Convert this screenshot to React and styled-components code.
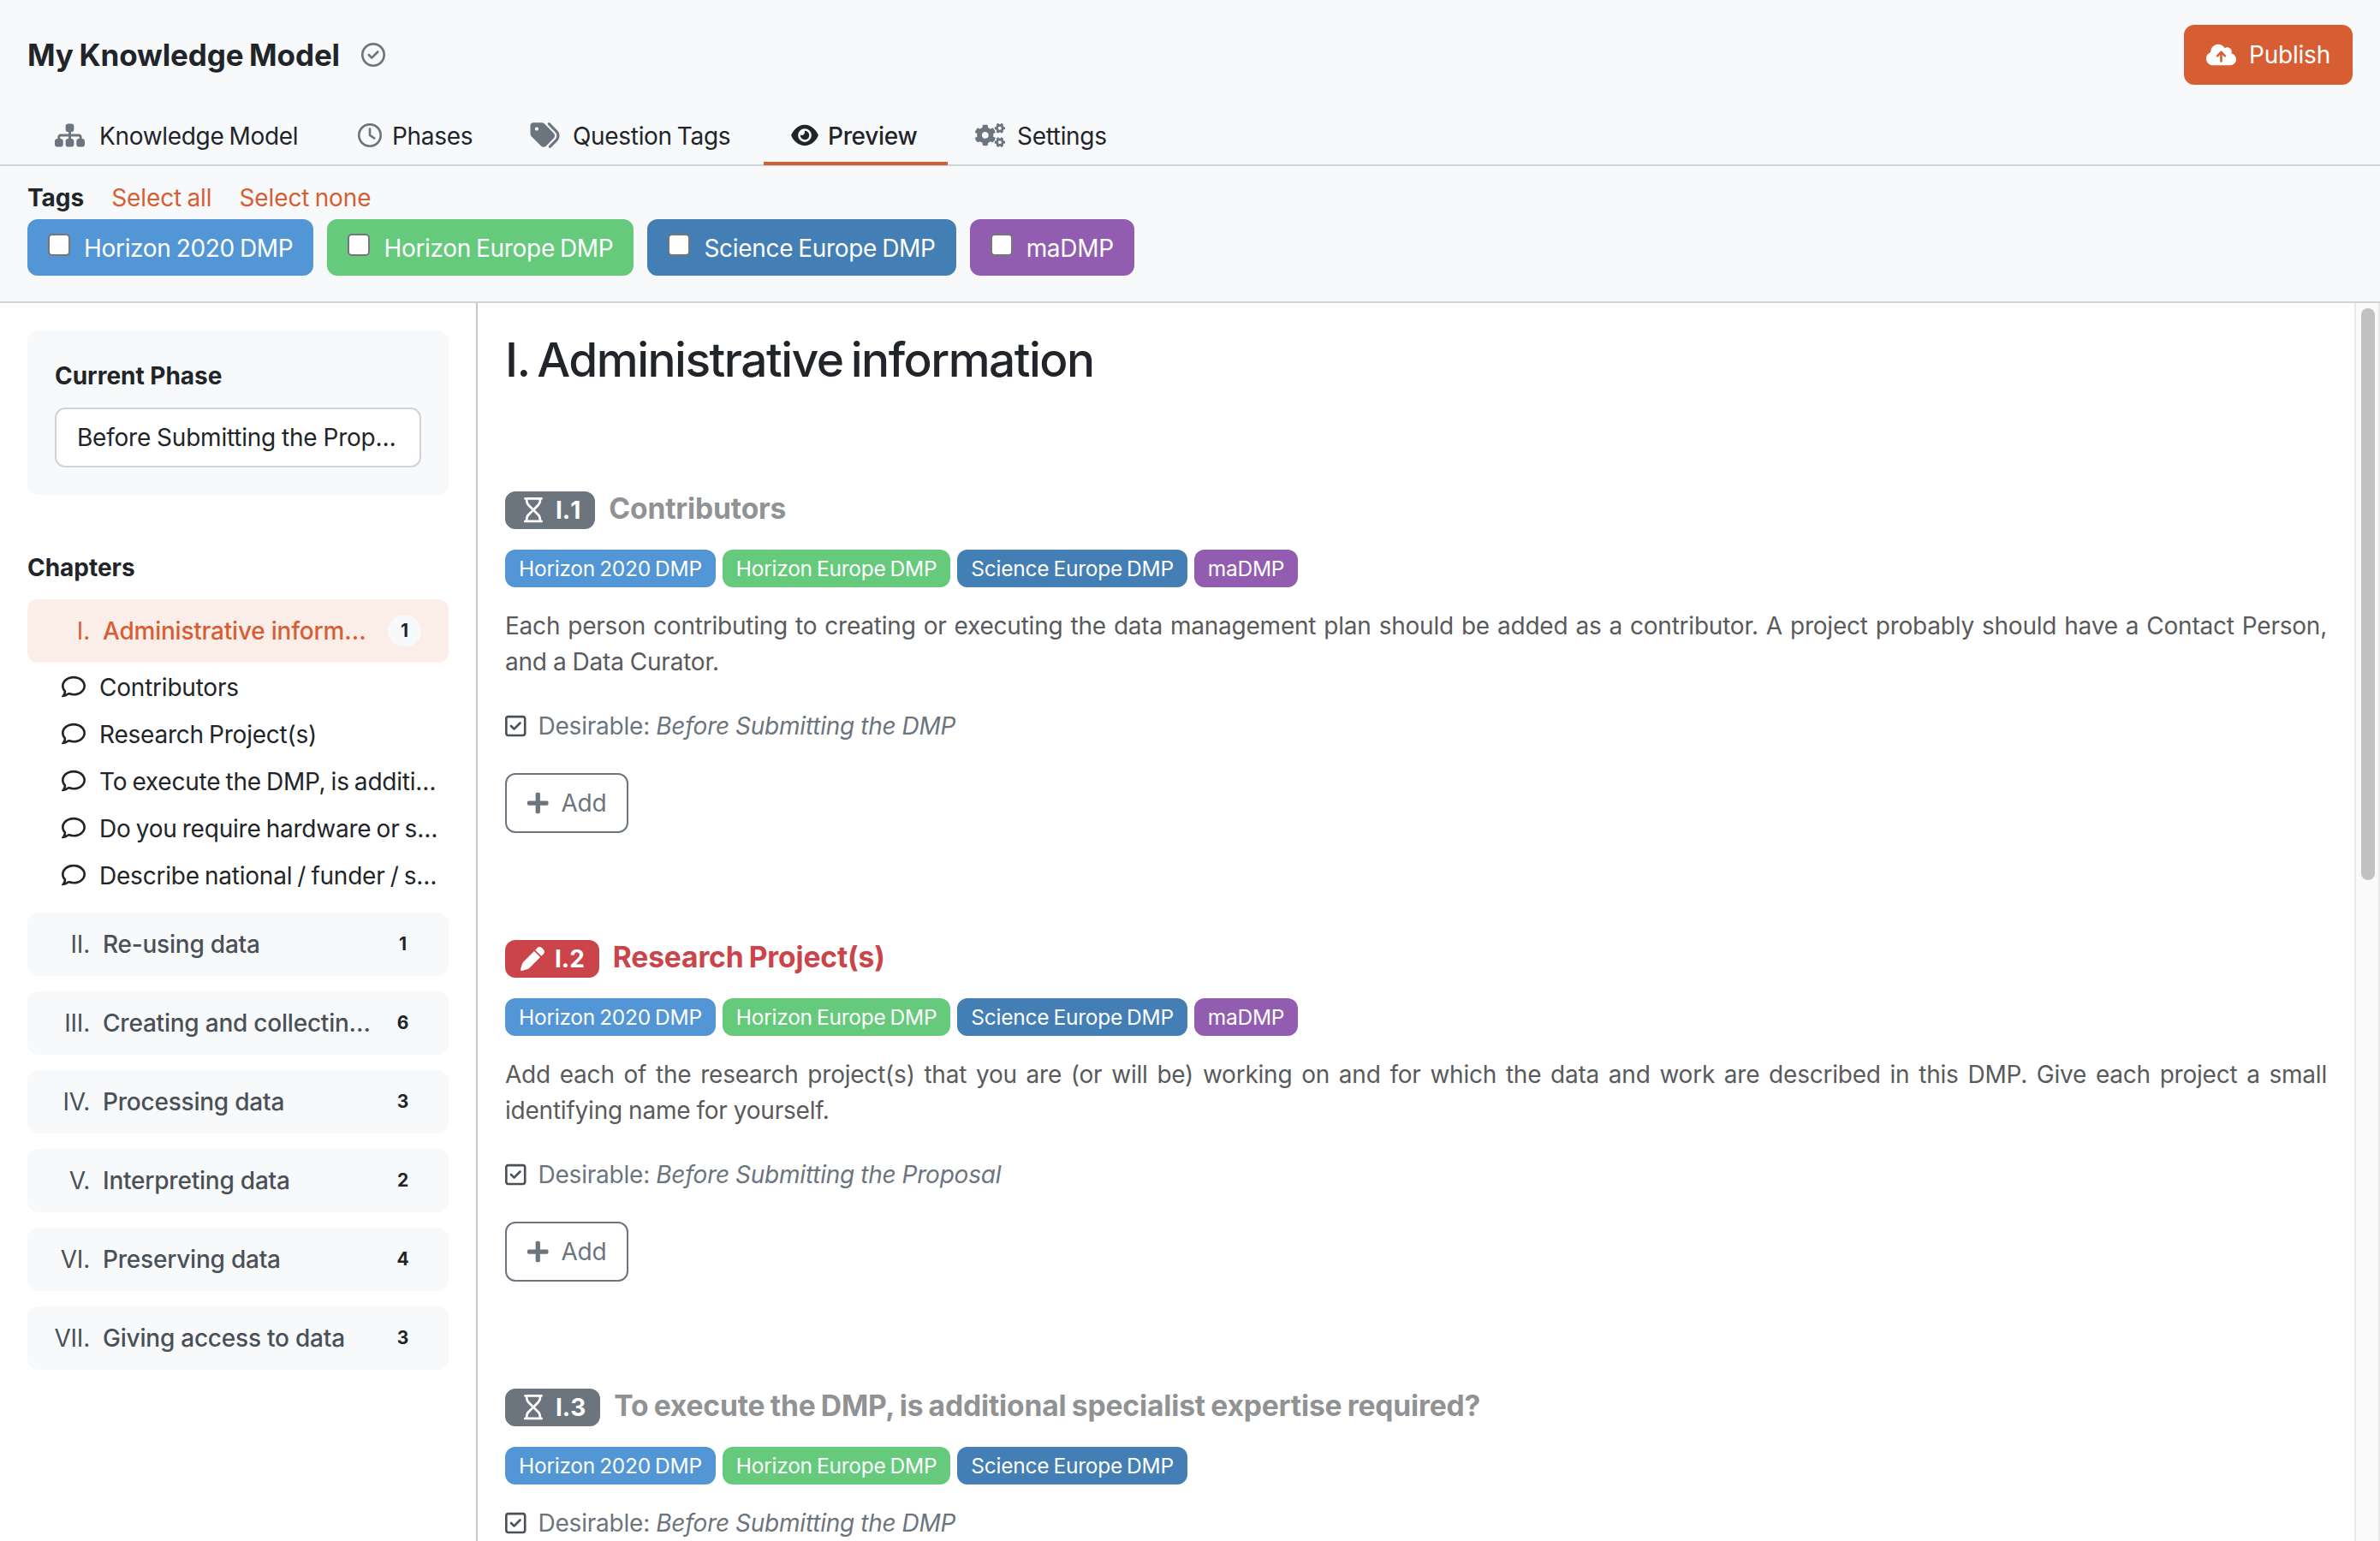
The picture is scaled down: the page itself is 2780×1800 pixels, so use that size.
import React from 'react';
import styled, { createGlobalStyle } from 'styled-components'
import {
  FaSitemap, FaRegClock, FaTags, FaEye, FaCloudArrowUp, FaRegCircleCheck,
  FaRegComment, FaRegHourglass, FaPen, FaRegSquareCheck,
} from "react-icons/fa6";
import { FaPlus, FaCogs } from "react-icons/fa";


const GlobalStyle = createGlobalStyle`
* {
  box-sizing: border-box;
}
body {
  margin: 0;
  background: #fff;
  color: #212529;
  font-family: Inter, "Liberation Sans", sans-serif;
  font-size: 28px;
  line-height: 42px;
  letter-spacing: -0.22px;
  word-spacing: -1.5px;
  overflow: hidden;
}
h1, h2, h3, p {
  margin: 0;
}
svg {
  display: block;
  flex: none;
}
`

const Page = styled.div`
display: flex;
flex-direction: column;
width: 100vw;
height: 100vh;
overflow: hidden;
white-space: nowrap;
`

const Header = styled.header`
display: flex;
align-items: center;
height: 126px;
padding: 2px 32px 0;
background: #f8f9fb;
`

const ModelName = styled.h1`
flex: 1;
display: flex;
align-items: center;
gap: 25px;
font-size: 35px;
font-weight: 700;
letter-spacing: -0.12px;
svg {
  font-size: 28px;
  color: #6c757d;
}
`

const Button = styled.button`
display: inline-flex;
align-items: center;
gap: 15px;
height: 70px;
padding: 0 24px;
border: 2px solid ${({ $primary }) => $primary ? '#d75e33' : '#6c757d'};
border-radius: 12px;
background: ${({ $primary }) => $primary ? '#d75e33' : '#fff'};
color: ${({ $primary }) => $primary ? '#fff' : '#6c757d'};
font: inherit;
letter-spacing: inherit;
svg {
  width: ${({ $primary }) => $primary ? 35 : 24.5}px;
  height: 28px;
}
`

const Tabs = styled.nav`
display: flex;
height: 68px;
padding: 0 32px;
border-bottom: 2px solid #ced4da;
background: #f8f9fb;
letter-spacing: -0.32px;
`

const Tab = styled.a`
display: flex;
align-items: center;
gap: ${({ $gap }) => $gap}px;
width: ${({ $width }) => $width}px;
height: 67px;
padding: 2px 0 0 32px;
font-weight: ${({ $active }) => $active ? 500 : 400};
border-bottom: 4px solid ${({ $active }) => $active ? '#d75e33' : 'transparent'};
svg {
  width: ${({ $iconWidth }) => $iconWidth}px;
  height: ${({ $iconHeight }) => $iconHeight || 28}px;
  margin-bottom: 2px;
  color: ${({ $active }) => $active ? '#212529' : '#6c757d'};
}
`

const TagBar = styled.section`
height: 160px;
padding: 16px 32px 0;
border-bottom: 2px solid #ced4da;
background: #f8f9fb;
`

const TagBarTop = styled.div`
display: flex;
gap: 32px;
height: 46px;
letter-spacing: -0.1px;
a {
  color: #d75e33;
}
`

const TagList = styled.div`
display: flex;
gap: 16px;
`

const TagOption = styled.label`
display: flex;
align-items: center;
gap: 16px;
height: 66px;
padding: 1px 24px 0;
border-radius: 12px;
background: ${({ $color }) => $color};
color: #fff;
letter-spacing: -0.31px;
`

const Checkbox = styled.input`
appearance: none;
width: 26px;
height: 26px;
margin: 0 0 7px;
border: 2px solid #767676;
border-radius: 5px;
background: #fff;
`

const Body = styled.div`
flex: 1;
display: flex;
min-height: 0;
`

const Sidebar = styled.aside`
width: 558px;
padding: 32px;
border-right: 2px solid #c8c8c8;
`

const PhaseCard = styled.div`
height: 192px;
margin-bottom: 64px;
padding: 32px;
border-radius: 12px;
background: #f8f9fb;
`

const SideTitle = styled.h2`
font-size: 28px;
font-weight: 700;
letter-spacing: -0.02px;
line-height: 42px;
word-spacing: 0;
`

const PhaseSelect = styled.div`
height: 70px;
margin-top: 16px;
padding: 12px 24px;
border: 2px solid #ced4da;
border-radius: 12px;
background: #fff;
word-spacing: -0.6px;
`

const ChapterList = styled.div`
display: flex;
flex-direction: column;
gap: 18px;
margin-top: 16px;
`

const Chapter = styled.div`
display: flex;
align-items: center;
height: 74px;
padding: 0 32px;
border-radius: 12px;
background: ${({ $active }) => $active ? '#fbeee9' : '#f8f9fb'};
color: ${({ $active }) => $active ? '#d75e33' : '#495057'};
font-weight: 500;
word-spacing: 0;
`

const ChapterNumber = styled.span`
width: 41px;
margin-right: 15px;
display: flex;
justify-content: flex-end;
font-weight: 400;
`

const ChapterName = styled.span`
flex: 1;
`

const Count = styled.span`
width: 39px;
height: 36px;
margin-right: ${({ $active }) => $active ? 0 : 2}px;
border-radius: 18px;
background: #f8f9fb;
color: #212529;
font-size: 21px;
font-weight: 700;
line-height: 36px;
text-align: center;
`

const Questions = styled.div`
display: flex;
flex-direction: column;
gap: 13px;
margin: -10px 0 4px;
padding: 0 0 0 40px;
`

const QuestionLink = styled.a`
display: flex;
align-items: center;
gap: 16px;
svg {
  margin-bottom: 3px;
}
`

const Main = styled.main`
flex: 1;
padding: 32px;
min-width: 0;
`

const ChapterTitle = styled.h2`
height: 188px;
font-size: 55px;
font-weight: 500;
letter-spacing: -1.5px;
word-spacing: -4px;
line-height: 69px;
`

const Question = styled.article`
margin-bottom: 125px;
`

const QuestionTitle = styled.h3`
display: flex;
align-items: center;
gap: 16px;
height: 44px;
color: ${({ $due }) => $due ? '#cb444a' : '#909294'};
font-size: 33.6px;
font-weight: 700;
letter-spacing: -0.15px;
span {
  margin-top: -4px;
}
`

const NumberBadge = styled.div`
display: flex;
align-items: center;
gap: ${({ $due }) => $due ? 12 : 15}px;
height: 44px;
padding: 0 17px 0 ${({ $due }) => $due ? 18 : 22}px;
border-radius: 12px;
background: ${({ $due }) => $due ? '#cb444a' : '#6c757d'};
color: #fff;
font-size: 28px;
font-kerning: none;
letter-spacing: 0;
svg {
  width: ${({ $due }) => $due ? 28 : 22}px;
  height: ${({ $due }) => $due ? 28 : 29.3}px;
}
`

const Badges = styled.div`
display: flex;
gap: 8px;
margin: 24px 0;
`

const Badge = styled.span`
height: 44px;
padding: 0 16px;
border-radius: 12px;
background: ${({ $color }) => $color};
color: #fff;
font-size: 24.5px;
letter-spacing: -0.25px;
line-height: 44px;
`

const Description = styled.p`
margin-bottom: 33px;
color: #595a5c;
text-align: justify;
white-space: normal;
word-spacing: -0.5px;
`

const Desirable = styled.div`
display: flex;
align-items: center;
gap: 14px;
margin-bottom: 34px;
color: #6c757d;
word-spacing: -0.5px;
svg {
  width: 24.5px;
  color: #495057;
}
`

const Scrollbar = styled.div`
width: 30px;
padding: 6px 4px 0 6px;
border: solid #e8e8e8;
border-width: 0 2px;
background: #fafafa;
`

const Thumb = styled.div`
width: 16px;
height: 668px;
border-radius: 8px;
background: #c1c1c1;
`

const tabs = [
  { name: 'Knowledge Model', icon: FaSitemap, iconWidth: 35, iconHeight: 32, width: 354, gap: 17 },
  { name: 'Phases', icon: FaRegClock, iconWidth: 28, width: 201, gap: 12 },
  { name: 'Question Tags', icon: FaTags, iconWidth: 35, iconHeight: 34, width: 305, gap: 15 },
  { name: 'Preview', icon: FaEye, iconWidth: 32, width: 215, gap: 11, active: true },
  { name: 'Settings', icon: FaCogs, iconWidth: 35, width: 220, gap: 14 },
]

const tags = [
  { name: 'Horizon 2020 DMP', color: '#5296d5' },
  { name: 'Horizon Europe DMP', color: '#65ca7b' },
  { name: 'Science Europe DMP', color: '#437eb4' },
  { name: 'maDMP', color: '#925cb0' },
]

const chapters = [
  {
    number: 'I.', name: 'Administrative inform…', count: 1, active: true,
    questions: [
      'Contributors',
      'Research Project(s)',
      'To execute the DMP, is additi…',
      'Do you require hardware or s…',
      'Describe national / funder / s…',
    ],
  },
  { number: 'II.', name: 'Re-using data', count: 1 },
  { number: 'III.', name: 'Creating and collectin…', count: 6 },
  { number: 'IV.', name: 'Processing data', count: 3 },
  { number: 'V.', name: 'Interpreting data', count: 2 },
  { number: 'VI.', name: 'Preserving data', count: 4 },
  { number: 'VII.', name: 'Giving access to data', count: 3 },
]

const questions = [
  {
    number: 'I.1',
    title: 'Contributors',
    tags: tags,
    text: 'Each person contributing to creating or executing the data management plan should be added as a contributor. A project probably should have a Contact Person, and a Data Curator.',
    phase: 'Before Submitting the DMP',
    list: true,
  },
  {
    number: 'I.2',
    title: 'Research Project(s)',
    due: true,
    tags: tags,
    text: 'Add each of the research project(s) that you are (or will be) working on and for which the data and work are described in this DMP. Give each project a small identifying name for yourself.',
    phase: 'Before Submitting the Proposal',
    list: true,
  },
  {
    number: 'I.3',
    title: 'To execute the DMP, is additional specialist expertise required?',
    tags: tags.slice(0, 3),
    phase: 'Before Submitting the DMP',
  },
]

function TopBar() {
  return (
    <>
      <Header>
        <ModelName>My Knowledge Model <FaRegCircleCheck /></ModelName>
        <Button $primary><FaCloudArrowUp />Publish</Button>
      </Header>
      <Tabs>
        {tabs.map(({ name, icon: Icon, iconWidth, iconHeight, width, gap, active }) => (
          <Tab key={name} $width={width} $gap={gap} $iconWidth={iconWidth} $iconHeight={iconHeight} $active={active}>
            <Icon />{name}
          </Tab>
        ))}
      </Tabs>
      <TagBar>
        <TagBarTop>
          <SideTitle>Tags</SideTitle>
          <a>Select all</a>
          <a>Select none</a>
        </TagBarTop>
        <TagList>
          {tags.map(tag => (
            <TagOption key={tag.name} $color={tag.color}><Checkbox type="checkbox" />{tag.name}</TagOption>
          ))}
        </TagList>
      </TagBar>
    </>
  )
}

function Navigation() {
  return (
    <Sidebar>
      <PhaseCard>
        <SideTitle>Current Phase</SideTitle>
        <PhaseSelect>Before Submitting the Prop…</PhaseSelect>
      </PhaseCard>
      <SideTitle>Chapters</SideTitle>
      <ChapterList>
        {chapters.map(chapter => (
          <React.Fragment key={chapter.number}>
            <Chapter $active={chapter.active}>
              <ChapterNumber>{chapter.number}</ChapterNumber>
              <ChapterName>{chapter.name}</ChapterName>
              <Count $active={chapter.active}>{chapter.count}</Count>
            </Chapter>
            {chapter.questions && (
              <Questions>
                {chapter.questions.map(q => <QuestionLink key={q}><FaRegComment />{q}</QuestionLink>)}
              </Questions>
            )}
          </React.Fragment>
        ))}
      </ChapterList>
    </Sidebar>
  )
}

function QuestionItem({ number, title, due, tags, text, phase, list }) {
  return (
    <Question>
      <QuestionTitle $due={due}>
        <NumberBadge $due={due}>
          {due ? <FaPen /> : <FaRegHourglass />}
          {number}
        </NumberBadge>
        <span>{title}</span>
      </QuestionTitle>
      <Badges>
        {tags.map(tag => <Badge key={tag.name} $color={tag.color}>{tag.name}</Badge>)}
      </Badges>
      {text && <Description>{text}</Description>}
      <Desirable><FaRegSquareCheck /><div>Desirable: <em>{phase}</em></div></Desirable>
      {list && <Button><FaPlus />Add</Button>}
    </Question>
  )
}

function App() {
  return (
    <Page>
      <GlobalStyle />
      <TopBar />
      <Body>
        <Navigation />
        <Main>
          <ChapterTitle>I. Administrative information</ChapterTitle>
          {questions.map(q => <QuestionItem key={q.number} {...q} />)}
        </Main>
        <Scrollbar><Thumb /></Scrollbar>
      </Body>
    </Page>
  );
}

export default App;
